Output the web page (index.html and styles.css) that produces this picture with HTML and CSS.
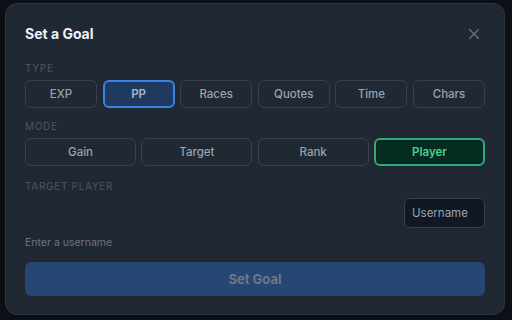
FILE: index.html
```html
<!DOCTYPE html>
<html>
<head>
<meta charset="utf-8">
<link rel="stylesheet" href="styles.css">
</head>
<body>
<div class="modal">
  <div class="header">
    <h2 class="title">Set a Goal</h2>
    <button class="close" aria-label="Close">
      <svg width="12" height="12" viewBox="0 0 12 12"><path d="M1.5 1.5L10.5 10.5M10.5 1.5L1.5 10.5" stroke="#6b7280" stroke-width="1.3" stroke-linecap="round"/></svg>
    </button>
  </div>
  <div class="label first">TYPE</div>
  <div class="grid six">
    <button class="opt">EXP</button>
    <button class="opt active-blue">PP</button>
    <button class="opt">Races</button>
    <button class="opt">Quotes</button>
    <button class="opt">Time</button>
    <button class="opt">Chars</button>
  </div>
  <div class="label">MODE</div>
  <div class="grid four">
    <button class="opt">Gain</button>
    <button class="opt">Target</button>
    <button class="opt">Rank</button>
    <button class="opt active-green">Player</button>
  </div>
  <div class="label">TARGET PLAYER</div>
  <div class="input-row">
    <input class="input" type="text" placeholder="Username">
  </div>
  <div class="hint">Enter a username</div>
  <button class="submit">Set Goal</button>
</div>
</body>
</html>
```
FILE: styles.css
```css
* { box-sizing: border-box; }
html, body { margin: 0; padding: 0; }
body {
  background: #0c1016;
  font-family: Inter, "Noto Sans", sans-serif;
  width: 512px;
  height: 320px;
  overflow: hidden;
}
.modal {
  margin: 3px 0 0 5px;
  width: 500px;
  background: #202833;
  border: 1px solid #2c3540;
  border-radius: 12px;
  padding: 20px 19px 18px 19px;
}
.header {
  display: flex;
  justify-content: space-between;
  align-items: center;
  height: 20px;
}
.title {
  margin: 0;
  font-size: 14px;
  line-height: 20px;
  font-weight: 700;
  color: #eef1f5;
}
.close {
  background: none;
  border: 0;
  padding: 0;
  margin-right: 5px;
  width: 12px;
  height: 12px;
  display: flex;
}
.label {
  margin-top: 12px;
  margin-bottom: 6px;
  font-size: 10px;
  line-height: 12px;
  letter-spacing: 0.07em;
  color: #4d5663;
}
.label.first { margin-top: 18px; }
.grid { display: grid; }
.grid.six { grid-template-columns: repeat(6, 1fr); gap: 5.6px; }
.grid.four { grid-template-columns: repeat(4, 1fr); gap: 5.3px; }
.opt {
  height: 28px;
  background: transparent;
  border: 1px solid #363f4b;
  border-radius: 6px;
  color: #9aa3af;
  font-family: inherit;
  font-size: 11.5px;
  font-weight: 500;
  padding: 0;
}
.active-blue {
  background: #1e3a5f;
  border: 2px solid #3b82e6;
  color: #a9b6c8;
  font-weight: 600;
}
.active-green {
  background: #062b20;
  border: 2px solid #33a878;
  color: #4ad192;
  font-weight: 600;
}
.grid.four + .label { margin-top: 14px; }
.input-row {
  display: flex;
  justify-content: flex-end;
}
.input {
  width: 81px;
  height: 30px;
  background: #111824;
  border: 1px solid #363f4b;
  border-radius: 6px;
  padding: 0 7px;
  font-family: inherit;
  font-size: 11.5px;
  color: #e5e7eb;
  outline: none;
}
.input::placeholder { color: #9aa3af; }
.hint {
  margin-top: 8px;
  font-size: 10.5px;
  line-height: 14px;
  color: #6b7480;
}
.submit {
  display: block;
  width: 100%;
  margin-top: 12px;
  height: 34px;
  background: #264673;
  border: 0;
  border-radius: 6px;
  color: #6f7886;
  font-family: inherit;
  font-size: 13px;
  font-weight: 700;
}
```
